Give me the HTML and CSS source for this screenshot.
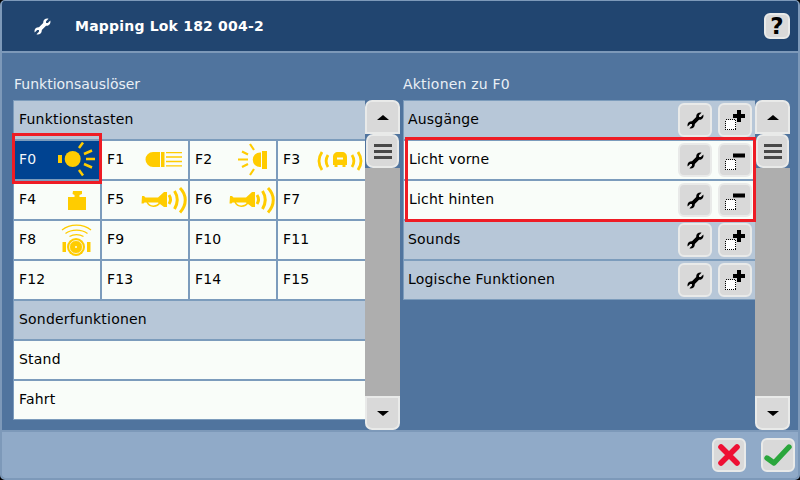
FILE: index.html
```html
<!DOCTYPE html>
<html lang="de">
<head>
<meta charset="utf-8">
<title>Mapping</title>
<link rel="stylesheet" href="styles.css">
</head>
<body>
<svg class="defs" width="0" height="0">
  <defs>
    <path id="wrench" d="M23 3.5 19.5 7 17 7 17 4.5 20.5 1C17 0 13 2 13 6L13 7 7 13 6 13C2 13 0 17 1 20.5L4.5 17 7 17 7 19.5 3.5 23C7 24 11 22 11 18L11 17 17 11 18 11C22 11 24 7 23 3.5Z"/>
    <g id="horn">
      <path fill="#fc0" d="M142 196h2l1.500 1.500h12.500l6-5.500h3v15h-3l-6-4.500h-13.500l-1 1h-2z"/>
      <path d="M147 202c2.500 5.500 10 5.500 13 .5" fill="none" stroke="#fc0" stroke-width="1.500"/>
      <path d="M169 195c2 3 2 6 0 9M174.500 191c3.500 5.500 3.500 12 0 18M180 188c7 7 7 17 0 24.500" fill="none" stroke="#fc0" stroke-width="3"/>
    </g>
    <rect id="dots" x=".5" y="9.500" width="10" height="10" fill="#fff" stroke="#000" stroke-dasharray="1 1" shape-rendering="crispEdges"/>
    <g id="opt-add">
      <use href="#dots"/>
      <path d="M12 0h4v4h4v4h-4v4h-4v-4h-4v-4h4z"/>
    </g>
    <g id="opt-del">
      <use href="#dots"/>
      <rect x="8" y="3.500" width="12" height="4"/>
    </g>
  </defs>
</svg>
<div class="app">
  <header class="head">
    <svg class="head-wrench" viewBox="0 0 24 24"><use href="#wrench"/></svg>
    <h1 class="title">Mapping Lok 182 004-2</h1>
    <button class="btn help">?</button>
  </header>
  <main class="main">
    <section class="panel panel-left">
      <h2 class="label label-tight">Funktionsauslöser</h2>
      <div class="body">
        <div class="list">
          <div class="row group">Funktionstasten</div>
          <div class="grid">
            <div class="cell sel">F0
              <svg class="ic" viewBox="14 141 86 38"><rect x="58" y="155" width="4" height="8" fill="#fc0"/><circle cx="72.700" cy="159" r="8" fill="#fc0"/><path d="M86 159h9M84 154l8-3.500M84 164l8 3.500M79 148l4-5.500M79 170l4 5.500" stroke="#fc0" stroke-width="2.500" fill="none"/></svg>
            </div>
            <div class="cell">F1
              <svg class="ic" viewBox="102 141 86 38"><path fill="#fc0" d="M160 152h-7a7.500 7.500 0 0 0 0 15h7zM161 152h3.500v15h-3.500z"/><path d="M166 152.700h16M166 157h16M166 161.500h16M166 165.800h16" stroke="#fc0" stroke-width="1.300"/></svg>
            </div>
            <div class="cell">F2
              <svg class="ic" viewBox="190 141 86 38"><path fill="#fc0" d="M261 152.500h-1a7 7 0 0 0 0 14.500h1zM262 151h5v18h-5z"/><path d="M238 159.500h10M242 151.500l6 3M242 167l6-3M250 144l4 6M250 175l4-6" stroke="#fc0" stroke-width="2.200" fill="none"/></svg>
            </div>
            <div class="cell">F3
              <svg class="ic ic-end" viewBox="278 141 87 38"><path fill="#fc0" d="M333 157c0-3 2-5 5-5h4c3 0 5 2 5 5v8h-1.500v2h-3v-2h-5v2h-3v-2h-1.500z"/><rect x="337" y="157.500" width="6" height="2" fill="#f9fdf9"/><path d="M322 152c-4 6-4 12 0 18M328 155c-2.500 4-2.500 8 0 12M358 152c4 6 4 12 0 18M352 155c2.500 4 2.500 8 0 12" fill="none" stroke="#fc0" stroke-width="2.800"/></svg>
            </div>
            <div class="cell">F4
              <svg class="ic" viewBox="14 181 86 38"><path fill="#fc0" d="M73 191h9v3l-2.500 1v2h6.500v13h-18v-13h6.500v-2l-2-1z"/></svg>
            </div>
            <div class="cell">F5
              <svg class="ic" viewBox="102 181 86 38"><use href="#horn"/></svg>
            </div>
            <div class="cell">F6
              <svg class="ic" viewBox="102 181 86 38"><use href="#horn"/></svg>
            </div>
            <div class="cell">F7</div>
            <div class="cell">F8
              <svg class="ic" viewBox="14 221 86 38"><path d="M62 230c8-6.500 21-6.500 29 0M65.500 233.500c6-4.500 16-4.500 22 0M69.500 236.500c4-2.500 10-2.500 14 0" fill="none" stroke="#fc0" stroke-width="1.300"/><circle cx="76" cy="247" r="9" fill="#fc0"/><circle cx="76" cy="247" r="6.500" fill="none" stroke="#f9fdf9" stroke-width=".8"/><circle cx="76" cy="247" r="1" fill="#f9fdf9"/><path fill="#fc0" d="M62.500 242h3.500v10h-3.500zM87 242h3.500v10h-3.500z"/></svg>
            </div>
            <div class="cell">F9</div>
            <div class="cell">F10</div>
            <div class="cell">F11</div>
            <div class="cell">F12</div>
            <div class="cell">F13</div>
            <div class="cell">F14</div>
            <div class="cell">F15</div>
          </div>
          <div class="row group">Sonderfunktionen</div>
          <div class="row">Stand</div>
          <div class="row">Fahrt</div>
          <div class="mark mark-f0"></div>
        </div>
        <div class="scroll">
          <button class="btn sb up"><span class="tri-up"></span></button>
          <button class="btn thumb"><span class="bars"></span></button>
          <span class="track"></span>
          <button class="btn sb down"><span class="tri-down"></span></button>
        </div>
      </div>
    </section>
    <section class="panel panel-right">
      <h2 class="label">Aktionen zu F0</h2>
      <div class="body">
        <div class="list list-right">
          <div class="row group">Ausgänge
            <span class="acts">
              <button class="btn act"><svg class="w" viewBox="0 0 24 24"><use href="#wrench"/></svg></button>
              <button class="btn act"><svg class="o" viewBox="0 0 20 20"><use href="#opt-add"/></svg></button>
            </span>
          </div>
          <div class="row">Licht vorne
            <span class="acts">
              <button class="btn act"><svg class="w" viewBox="0 0 24 24"><use href="#wrench"/></svg></button>
              <button class="btn act"><svg class="o" viewBox="0 0 20 20"><use href="#opt-del"/></svg></button>
            </span>
          </div>
          <div class="row">Licht hinten
            <span class="acts">
              <button class="btn act"><svg class="w" viewBox="0 0 24 24"><use href="#wrench"/></svg></button>
              <button class="btn act"><svg class="o" viewBox="0 0 20 20"><use href="#opt-del"/></svg></button>
            </span>
          </div>
          <div class="row group">Sounds
            <span class="acts">
              <button class="btn act"><svg class="w" viewBox="0 0 24 24"><use href="#wrench"/></svg></button>
              <button class="btn act"><svg class="o" viewBox="0 0 20 20"><use href="#opt-add"/></svg></button>
            </span>
          </div>
          <div class="row group">Logische Funktionen
            <span class="acts">
              <button class="btn act"><svg class="w" viewBox="0 0 24 24"><use href="#wrench"/></svg></button>
              <button class="btn act"><svg class="o" viewBox="0 0 20 20"><use href="#opt-add"/></svg></button>
            </span>
          </div>
          <div class="mark mark-licht"></div>
        </div>
        <div class="scroll">
          <button class="btn sb up"><span class="tri-up"></span></button>
          <button class="btn thumb"><span class="bars"></span></button>
          <span class="track"></span>
          <button class="btn sb down"><span class="tri-down"></span></button>
        </div>
      </div>
    </section>
  </main>
  <footer class="foot">
    <button class="btn act"><svg class="big" viewBox="0 0 24 24"><path d="M4 4 20 20M20 4 4 20" stroke="#ee0f33" stroke-width="5.600" stroke-linecap="round"/></svg></button>
    <button class="btn act"><svg class="big ok" viewBox="0 0 28 24"><path d="M3 15 10 20 25 4" fill="none" stroke="#2aa63c" stroke-width="5.400" stroke-linecap="round" stroke-linejoin="round"/></svg></button>
  </footer>
</div>
</body>
</html>
```

FILE: styles.css
```css
* { box-sizing: border-box; margin: 0; padding: 0; }
html, body { width: 800px; height: 480px; overflow: hidden; background: #000; }
.defs { position: absolute; }
.app {
  width: 800px; height: 480px;
  display: flex; flex-direction: column;
  font: 14px "DejaVu Sans", sans-serif;
  letter-spacing: .2px;
  color: #000;
  background: #50749e;
  border: 2px solid #7d99b9;
  border-width: 1px 2px 2px 2px;
  border-radius: 5px;
  overflow: hidden;
}
.head {
  height: 52px; flex: none;
  display: flex; align-items: center;
  background: #214570;
  border-bottom: 2px solid #7d99b9;
  padding: 0 8px 0 32px;
}
.head-wrench { width: 17px; height: 17px; fill: #fff; margin-top: 1px; }
.title { font-size: 14px; font-weight: bold; color: #fff; margin-left: 24px; flex: 1; }
.btn {
  border: 2px solid #e9eae9;
  background: #d9d9d9;
  border-radius: 6px;
  display: flex; align-items: center; justify-content: center;
  flex: none;
}
.help {
  width: 26px; height: 26px;
  font: bold 23px "DejaVu Sans", sans-serif; color: #000;
}
.main {
  flex: 1; min-height: 0;
  display: flex;
  padding-left: 11px;
  padding-right: 8px;
}
.panel { display: flex; flex-direction: column; }
.panel-left { width: 387px; margin-right: 3px; }
.panel-right { width: 387px; }
.label {
  font-size: 14px; font-weight: normal; color: #e9eff5;
  height: 47px; padding: 23px 0 0 1px; line-height: 17px;
}
.label-tight { letter-spacing: 0; }
.panel-right .label { padding-left: 0; }
.body { display: flex; align-items: flex-start; }
.list {
  position: relative;
  width: 352px;
  background: #7c9cbc;
  display: flex; flex-direction: column; gap: 2px;
  padding: 1px 0 1px 1px;
}
.row {
  height: 38px;
  background: #f9fdf9;
  display: flex; align-items: center;
  padding: 0 0 2px 5px;
  line-height: 17px;
}
.group { background: #b7c7d8; }
.grid {
  display: grid;
  grid-template-columns: 86px 86px 86px 87px;
  grid-auto-rows: 38px;
  gap: 2px;
}
.cell {
  position: relative;
  background: #f9fdf9;
  display: flex; align-items: center;
  padding: 0 0 2px 5px;
}
.sel { background: #004391; color: #f3f6fa; }
.ic { position: absolute; left: 0; top: 0; width: 86px; height: 38px; }
.ic-end { width: 87px; }
.mark { position: absolute; border: 3px solid #ee1c25; pointer-events: none; }
.mark-f0 { left: -1px; top: 33px; width: 90px; height: 51px; }
.mark-licht { left: 2px; top: 37px; width: 351px; height: 85px; }
.list-right .row { justify-content: space-between; padding-left: 4px; }
.list-right .row:not(.group) { padding-left: 5px; }
.acts { display: flex; gap: 6px; margin: 0 3px -2px 0; }
.act { width: 34px; height: 34px; }
.w { width: 17px; height: 17px; }
.o { width: 20px; height: 20px; }
.scroll {
  width: 35px; height: 330px;
  display: flex; flex-direction: column; align-items: center;
}
.sb { width: 35px; height: 34px; }
.up { border-radius: 7px 7px 0 0; }
.down { border-radius: 0 0 7px 7px; }
.thumb { width: 33px; height: 34px; border-radius: 7px; }
.track { width: 35px; flex: 1; background: #aeaeae; }
.tri-up { width: 0; height: 0; border: 6.5px solid transparent; border-top: 0; border-bottom: 5px solid #000; }
.tri-down { width: 0; height: 0; border: 6.5px solid transparent; border-bottom: 0; border-top: 5px solid #000; }
.bars {
  width: 18px; height: 15px;
  background: linear-gradient(#484848 3px, transparent 3px, transparent 6px, #484848 6px, #484848 9px, transparent 9px, transparent 12px, #484848 12px);
}
.foot {
  height: 48px; flex: none;
  background: #90aac8;
  border-top: 2px solid #7d99b9;
  display: flex; justify-content: flex-end; gap: 15px;
  padding: 6px 3px 0 0;
}
.big { width: 24px; height: 24px; }
.big.ok { width: 28px; }
```
